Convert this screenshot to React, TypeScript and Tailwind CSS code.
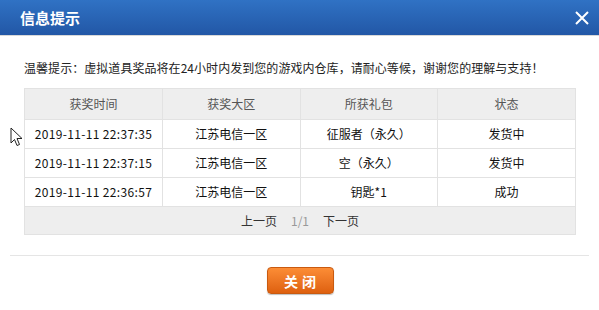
import React from "react";

const rows = [
  { time: "2019-11-11 22:37:35", zone: "江苏电信一区", gift: "征服者（永久）", status: "发货中" },
  { time: "2019-11-11 22:37:15", zone: "江苏电信一区", gift: "空（永久）", status: "发货中" },
  { time: "2019-11-11 22:36:57", zone: "江苏电信一区", gift: "钥匙*1", status: "成功" },
];

export default function App() {
  return (
    <div
      className="relative w-[599px] h-[310px] bg-white overflow-hidden text-[12px] text-[#111]"
      style={{ fontFamily: '"Microsoft YaHei", "Noto Sans CJK SC", sans-serif' }}
    >
      {/* Title bar */}
      <div className="h-[36px] flex items-center justify-between pl-[20px] pr-[9px] bg-gradient-to-b from-[#3072c4] to-[#2257a6] border-b border-[#d8d8d8]">
        <span className="text-white text-[15px] font-bold leading-none">信息提示</span>
        <svg width="16" height="16" viewBox="0 0 16 16" className="text-white">
          <path d="M2 2 L14 14 M14 2 L2 14" stroke="currentColor" strokeWidth="2" />
        </svg>
      </div>

      <p className="mt-[24px] px-[24px] leading-[16px] text-[#222] tracking-[0.05px]">
        温馨提示：虚拟道具奖品将在24小时内发到您的游戏内仓库，请耐心等候，谢谢您的理解与支持！
      </p>

      <div className="mx-[24px] mt-[12px] w-[552px] border border-[#e2e2e2]">
        <table className="w-full border-collapse table-fixed text-center">
          <thead>
            <tr className="h-[30px] bg-[#eeeeee] text-[#555]">
              <th className="font-normal border-r border-[#e2e2e2]">获奖时间</th>
              <th className="font-normal border-r border-[#e2e2e2]">获奖大区</th>
              <th className="font-normal border-r border-[#e2e2e2]">所获礼包</th>
              <th className="font-normal">状态</th>
            </tr>
          </thead>
          <tbody>
            {rows.map((r) => (
              <tr key={r.time} className="h-[29px] border-t border-[#e2e2e2]">
                <td className="border-r border-[#e2e2e2] tracking-[0.35px]">{r.time}</td>
                <td className="border-r border-[#e2e2e2]">{r.zone}</td>
                <td className="border-r border-[#e2e2e2]">{r.gift}</td>
                <td>{r.status}</td>
              </tr>
            ))}
          </tbody>
        </table>
        <div className="h-[28px] bg-[#eeeeee] border-t border-[#e2e2e2] flex items-center justify-center gap-[14px]">
          <span className="text-[#333]">上一页</span>
          <span className="text-[#999]">1/1</span>
          <span className="text-[#333]">下一页</span>
        </div>
      </div>

      <div className="mx-[10px] mt-[20px] border-t border-[#e5e5e5]" />

      <div className="flex justify-center mt-[11px] pl-[1px]">
        <button className="w-[67px] h-[27px] rounded-[4px] border border-[#c95a10] bg-gradient-to-b from-[#fc8d35] to-[#de600e] text-white text-[14px] font-bold tracking-[4px] pl-[4px] leading-none shadow-[0_1px_1px_rgba(0,0,0,0.25)]">
          关闭
        </button>
      </div>

      {/* mouse cursor over the page */}
      <svg width="14" height="20" viewBox="0 0 14 20" className="absolute left-[10px] top-[127px]">
        <path d="M1 1 L1 16 L4.5 12.5 L7 18.5 L9.5 17.5 L7 11.5 L12 11.5 Z" fill="white" stroke="#222" strokeWidth="1" strokeLinejoin="round" />
      </svg>
    </div>
  );
}
